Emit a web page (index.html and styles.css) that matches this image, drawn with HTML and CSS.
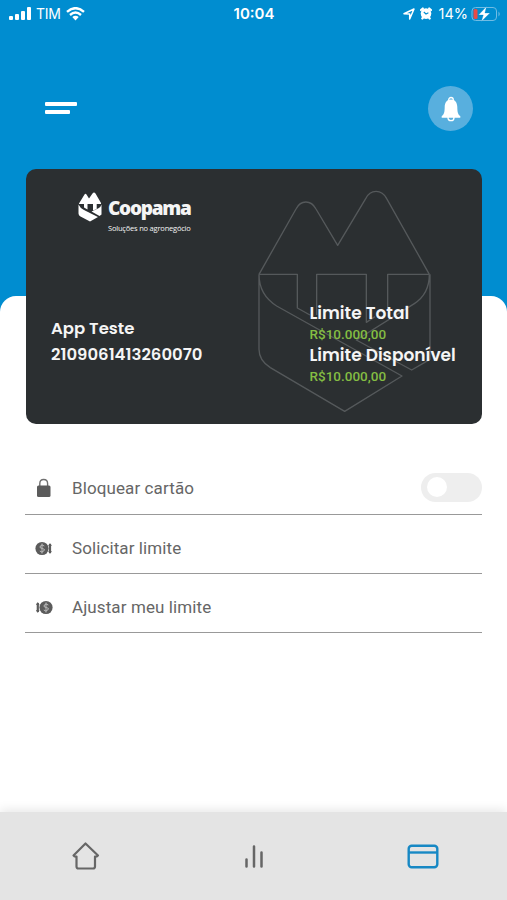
FILE: index.html
```html
<!DOCTYPE html>
<html lang="pt-BR">
<head>
    <meta charset="UTF-8">
    <meta name="viewport" content="width=device-width, initial-scale=1.0">
    <title>Coopama - Cartão</title>
    <link rel="stylesheet" href="styles.css">
</head>
<body>
    <div class="app">
        <div class="status-bar">
            <div class="status-left">
                <svg width="23" height="14" viewBox="0 0 23 14" fill="#fff">
                    <rect x="0" y="9" width="4" height="4" rx="1"/>
                    <rect x="6" y="7" width="4" height="6" rx="1"/>
                    <rect x="12" y="4" width="4" height="9" rx="1"/>
                    <rect x="18" y="0" width="4" height="13" rx="1"/>
                </svg>
                <span class="carrier">TIM</span>
                <svg width="19" height="14" viewBox="0 0 19 14" fill="none" stroke="#fff" stroke-width="2.4">
                    <path d="M1 4.800Q9.500-2.500 18 4.800M4 8Q9.500 3.200 15 8"/>
                    <path d="M6.300 10Q9.500 7.300 12.700 10L9.500 13.500Z" fill="#fff" stroke="none"/>
                </svg>
            </div>
            <span class="time">10:04</span>
            <div class="status-right">
                <svg class="location" width="12" height="12" viewBox="0 0 12 12" fill="none" stroke="#fff" stroke-width="1.5" stroke-linejoin="round">
                    <path d="M1 5.800L11 1L6.700 11V6Z"/>
                </svg>
                <svg class="alarm" width="12" height="13" viewBox="0 0 12 13">
                    <path d="M1 3L2.800 1.500M11 3L9.200 1.500M2.300 11.500L3.500 10M9.700 11.500L8.500 10" stroke="#fff" stroke-width="2.200" stroke-linecap="round"/>
                    <circle cx="6" cy="6.600" r="5.300" fill="#fff"/>
                    <path d="M3.800 5L6 7L8.400 5.800" fill="none" stroke="#008dd0" stroke-width="1.100"/>
                </svg>
                <span class="percent">14%</span>
                <svg width="30" height="16" viewBox="0 0 30 16">
                    <rect x="1" y="1.500" width="24.500" height="13" rx="3.500" fill="none" stroke="#70bce4"/>
                    <path d="M27.500 5.500Q30 8 27.500 10.500Z" fill="#70bce4"/>
                    <rect x="2.500" y="3" width="4" height="10" rx="1.500" fill="#e84a45"/>
                    <path d="M15.500 .5L7.500 9H12.300L10.300 15.500L19 7H13.900Z" fill="#fff" stroke="#008dd0" stroke-width=".3"/>
                </svg>
            </div>
        </div>

        <header class="top-bar">
            <button class="menu-btn" aria-label="Menu">
                <span class="menu-line"></span>
                <span class="menu-line short"></span>
            </button>
            <button class="bell-btn" aria-label="Notificações">
                <svg width="20" height="26" viewBox="0 0 20 26">
                    <circle cx="10" cy="3.800" r="2.300" fill="none" stroke="#fff" stroke-width="1.300"/>
                    <circle cx="10" cy="21.700" r="3" fill="none" stroke="#fff" stroke-width="1.300"/>
                    <path d="M10 3.500C5.600 3.500 3.800 7 3.700 11C3.600 16 3.200 18.500 .7 20V21.800H19.300V20C16.800 18.500 16.400 16 16.300 11C16.200 7 14.400 3.500 10 3.500Z" fill="#fff"/>
                </svg>
            </button>
        </header>

        <main class="sheet">
            <section class="card">
                <svg class="watermark" viewBox="45 87 540 675" fill="none" stroke="#55595b" stroke-width="4" stroke-linejoin="round">
                    <path d="M57 343L168 147C182 119 213 119 228 147L293 256L377 116C391 87 425 87 440 116L568 343"/>
                    <path d="M57 343H172V444L210 465M230 465V343H379V487L405 470M443 448V343H568"/>
                    <path d="M57 343V568Q57 602 91 623L314 754L486 648L110 438Q57 405 57 343"/>
                    <path d="M568 343Q568 402 523 431L349 540L515 630L570 598V343"/>
                </svg>
                <div class="logo">
                    <svg width="24" height="30" viewBox="0 0 24 30">
                        <path d="M1 11.500L6.500 2.500Q7.500 1 8.500 2.500L11 6.500L14.500 1.500Q16-.5 17.500 1.500L23 11V12H18.700V17L15 18.500V12H9.500V17.500L6 15.500V12H1Z" fill="#fff"/>
                        <path d="M.5 12.500Q2 16 6 18L20 25L12 29.500L2.500 24.500Q.5 23.500 .5 21.500ZM23.500 12.500V22.500L21.500 24L13.500 19.500L20 16.500Q23 15 23.500 12.500Z" fill="#fff"/>
                    </svg>
                    <div class="logo-text">
                        <span class="logo-name">Coopama</span>
                        <span class="logo-slogan">Soluções no agronegócio</span>
                    </div>
                </div>
                <div class="card-info">
                    <div class="holder">
                        <p class="name">App Teste</p>
                        <p class="number">2109061413260070</p>
                    </div>
                    <div class="limits">
                        <p class="limit-total">Limite Total</p>
                        <p class="value">R$10.000,00</p>
                        <p class="limit-available">Limite Disponível</p>
                        <p class="value">R$10.000,00</p>
                    </div>
                </div>
            </section>

            <ul class="options">
                <li class="option">
                    <svg width="18" height="20" viewBox="0 0 18 20">
                        <path d="M4.800 9V5.500Q4.800 1.500 8.700 1.500T12.600 5.500V9" fill="none" stroke="#707070" stroke-width="1.400"/>
                        <rect x="2" y="7.500" width="13.500" height="11.500" rx="1.500" fill="#5b5b5b"/>
                    </svg>
                    <span class="option-label">Bloquear cartão</span>
                    <span class="switch"></span>
                </li>
                <li class="option second">
                    <svg width="18" height="16" viewBox="0 0 18 16">
                        <circle cx="7" cy="8.500" r="6.600" fill="#5b5b5b"/>
                        <path d="M9.300 6Q6.800 4 5.300 6T7.300 8.500T8.800 11T4.800 11M7 3.500V13.500" fill="none" stroke="#bbb" stroke-width="1"/>
                        <path d="M15 4V13" stroke="#5b5b5b" stroke-width="2.200"/>
                        <path d="M13.200 6L15 3L16.800 6ZM13.200 11L15 14L16.800 11Z" fill="#5b5b5b"/>
                    </svg>
                    <span class="option-label">Solicitar limite</span>
                </li>
                <li class="option third">
                    <svg width="18" height="16" viewBox="0 0 18 16">
                        <circle cx="11" cy="8.500" r="6.600" fill="#5b5b5b"/>
                        <path d="M13.300 6Q10.800 4 9.300 6T11.300 8.500T12.800 11T8.800 11M11 3.500V13.500" fill="none" stroke="#bbb" stroke-width="1"/>
                        <path d="M2.800 4V13" stroke="#5b5b5b" stroke-width="2.200"/>
                        <path d="M1 6L2.800 3L4.600 6ZM1 11L2.800 14L4.600 11Z" fill="#5b5b5b"/>
                    </svg>
                    <span class="option-label">Ajustar meu limite</span>
                </li>
            </ul>
        </main>

        <nav class="tab-bar">
            <a class="tab">
                <svg width="30" height="32" viewBox="0 0 30 32" fill="none" stroke="#666" stroke-width="2.2" stroke-linecap="round" stroke-linejoin="round">
                    <path d="M15.500 3.500L3.500 15.500Q4.500 17 6.500 16.500V26.500Q6.500 28.500 8.500 28.500H23Q25 28.500 25 26.500V16.500Q27 17 28 15.500Z"/>
                </svg>
            </a>
            <a class="tab">
                <svg width="30" height="32" viewBox="0 0 30 32" stroke="#666" stroke-width="2.5" stroke-linecap="round">
                    <path d="M7.500 19.500V26.500M15 6.500V26.500M22.500 12.500V26.500"/>
                </svg>
            </a>
            <a class="tab active">
                <svg width="34" height="32" viewBox="0 0 34 32" fill="none" stroke="#1788c4" stroke-width="2.400">
                    <rect x="2.700" y="5.700" width="28.600" height="21.600" rx="3"/>
                    <path d="M3 12.500H31"/>
                </svg>
            </a>
        </nav>
    </div>
</body>
</html>
```

FILE: styles.css
```css
:root {
    --blue: #008dd0;
    --card: #2b2f31;
    --green: #84bd43;
    --text: #666;
}

* {
    box-sizing: border-box;
    margin: 0;
    padding: 0;
}

body {
    background: var(--blue);
    font-family: Roboto, sans-serif;
}

.app {
    height: 900px;
    display: flex;
    flex-direction: column;
    overflow: hidden;
}

.status-bar {
    height: 27px;
    padding: 0 6px 0 9px;
    display: grid;
    grid-template-columns: 1fr auto 1fr;
    align-items: center;
    color: #fff;
    font-family: Inter, sans-serif;
    font-size: 14px;
}

.status-left,
.status-right {
    display: flex;
    align-items: center;
}

.status-left {
    gap: 4px;
}

.status-right {
    justify-content: flex-end;
}

.carrier {
    width: 26px;
    letter-spacing: -0.3px;
}

.time {
    margin-right: 2px;
    font-size: 15px;
    font-weight: 600;
}

.location {
    margin-right: 5px;
}

.alarm {
    margin-right: 6px;
}

.percent {
    margin-right: 3px;
    font-size: 14.5px;
}

.top-bar {
    height: 269px;
    padding: 59px 34px 0 45px;
    display: flex;
    justify-content: space-between;
    align-items: flex-start;
}

.menu-btn,
.bell-btn {
    border: none;
    cursor: pointer;
}

.menu-btn {
    background: none;
    padding-top: 16px;
    display: flex;
    flex-direction: column;
    gap: 4px;
}

.menu-line {
    width: 32px;
    height: 4px;
    border-radius: 1px;
    background: #fff;
}

.menu-line.short {
    width: 25px;
}

.bell-btn {
    width: 45px;
    height: 45px;
    border-radius: 50%;
    background: #58afde;
    display: flex;
    align-items: center;
    justify-content: center;
}

.sheet {
    flex: 1;
    background: #fff;
    border-radius: 16px 16px 0 0;
    padding: 0 25px;
}

.card {
    position: relative;
    height: 255px;
    margin: -127px 0 0 1px;
    border-radius: 10px;
    background: var(--card);
    color: #f5f5f5;
}

.watermark {
    position: absolute;
    left: 229px;
    top: 20px;
    width: 180px;
    height: 225px;
}

.logo {
    height: 134px;
    padding: 23px 0 0 52px;
    display: flex;
    gap: 6px;
}

.logo-text {
    display: flex;
    flex-direction: column;
    font-family: "Open Sans", sans-serif;
    white-space: nowrap;
}

.logo-name {
    margin-top: 3px;
    font-size: 19px;
    font-weight: 800;
    line-height: 26px;
    letter-spacing: -1.25px;
}

.logo-slogan {
    margin-top: 2px;
    font-size: 7.5px;
    line-height: 10px;
    letter-spacing: -0.2px;
}

.card-info {
    position: relative;
    display: flex;
    padding-left: 25px;
    font-family: Poppins, Inter, sans-serif;
    font-size: 17px;
    font-weight: 600;
    white-space: nowrap;
}

.holder {
    width: 258.5px;
    padding-top: 13px;
    line-height: 26px;
    font-size: 16.5px;
}

.limits p {
    line-height: 21px;
}

.limits .value {
    color: var(--green);
    font-family: Roboto, sans-serif;
    font-size: 13.5px;
    font-weight: 500;
}

.options {
    padding-top: 38px;
    list-style: none;
}

.option {
    height: 53px;
    padding-left: 10px;
    display: flex;
    align-items: center;
    border-bottom: 1px solid #999;
}

.option.second {
    height: 59px;
    padding-top: 8px;
}

.option.third {
    height: 59px;
    padding-top: 7px;
}

.option-label {
    margin-left: 19px;
    color: var(--text);
    font-size: 17px;
    letter-spacing: 0.1px;
}

.switch {
    width: 61px;
    height: 29px;
    margin: 0 0 1px auto;
    padding: 4px 6px;
    border-radius: 15px;
    background: #eee;
}

.switch::before {
    content: "";
    display: block;
    width: 20px;
    height: 20px;
    border-radius: 50%;
    background: #fff;
}

.tab-bar {
    height: 88px;
    display: grid;
    grid-template-columns: repeat(3, 1fr);
    background: #e4e4e4;
    box-shadow: 0 -2px 10px rgba(0, 0, 0, 0.1);
}

.tab {
    display: flex;
    align-items: center;
    justify-content: center;
}
```
